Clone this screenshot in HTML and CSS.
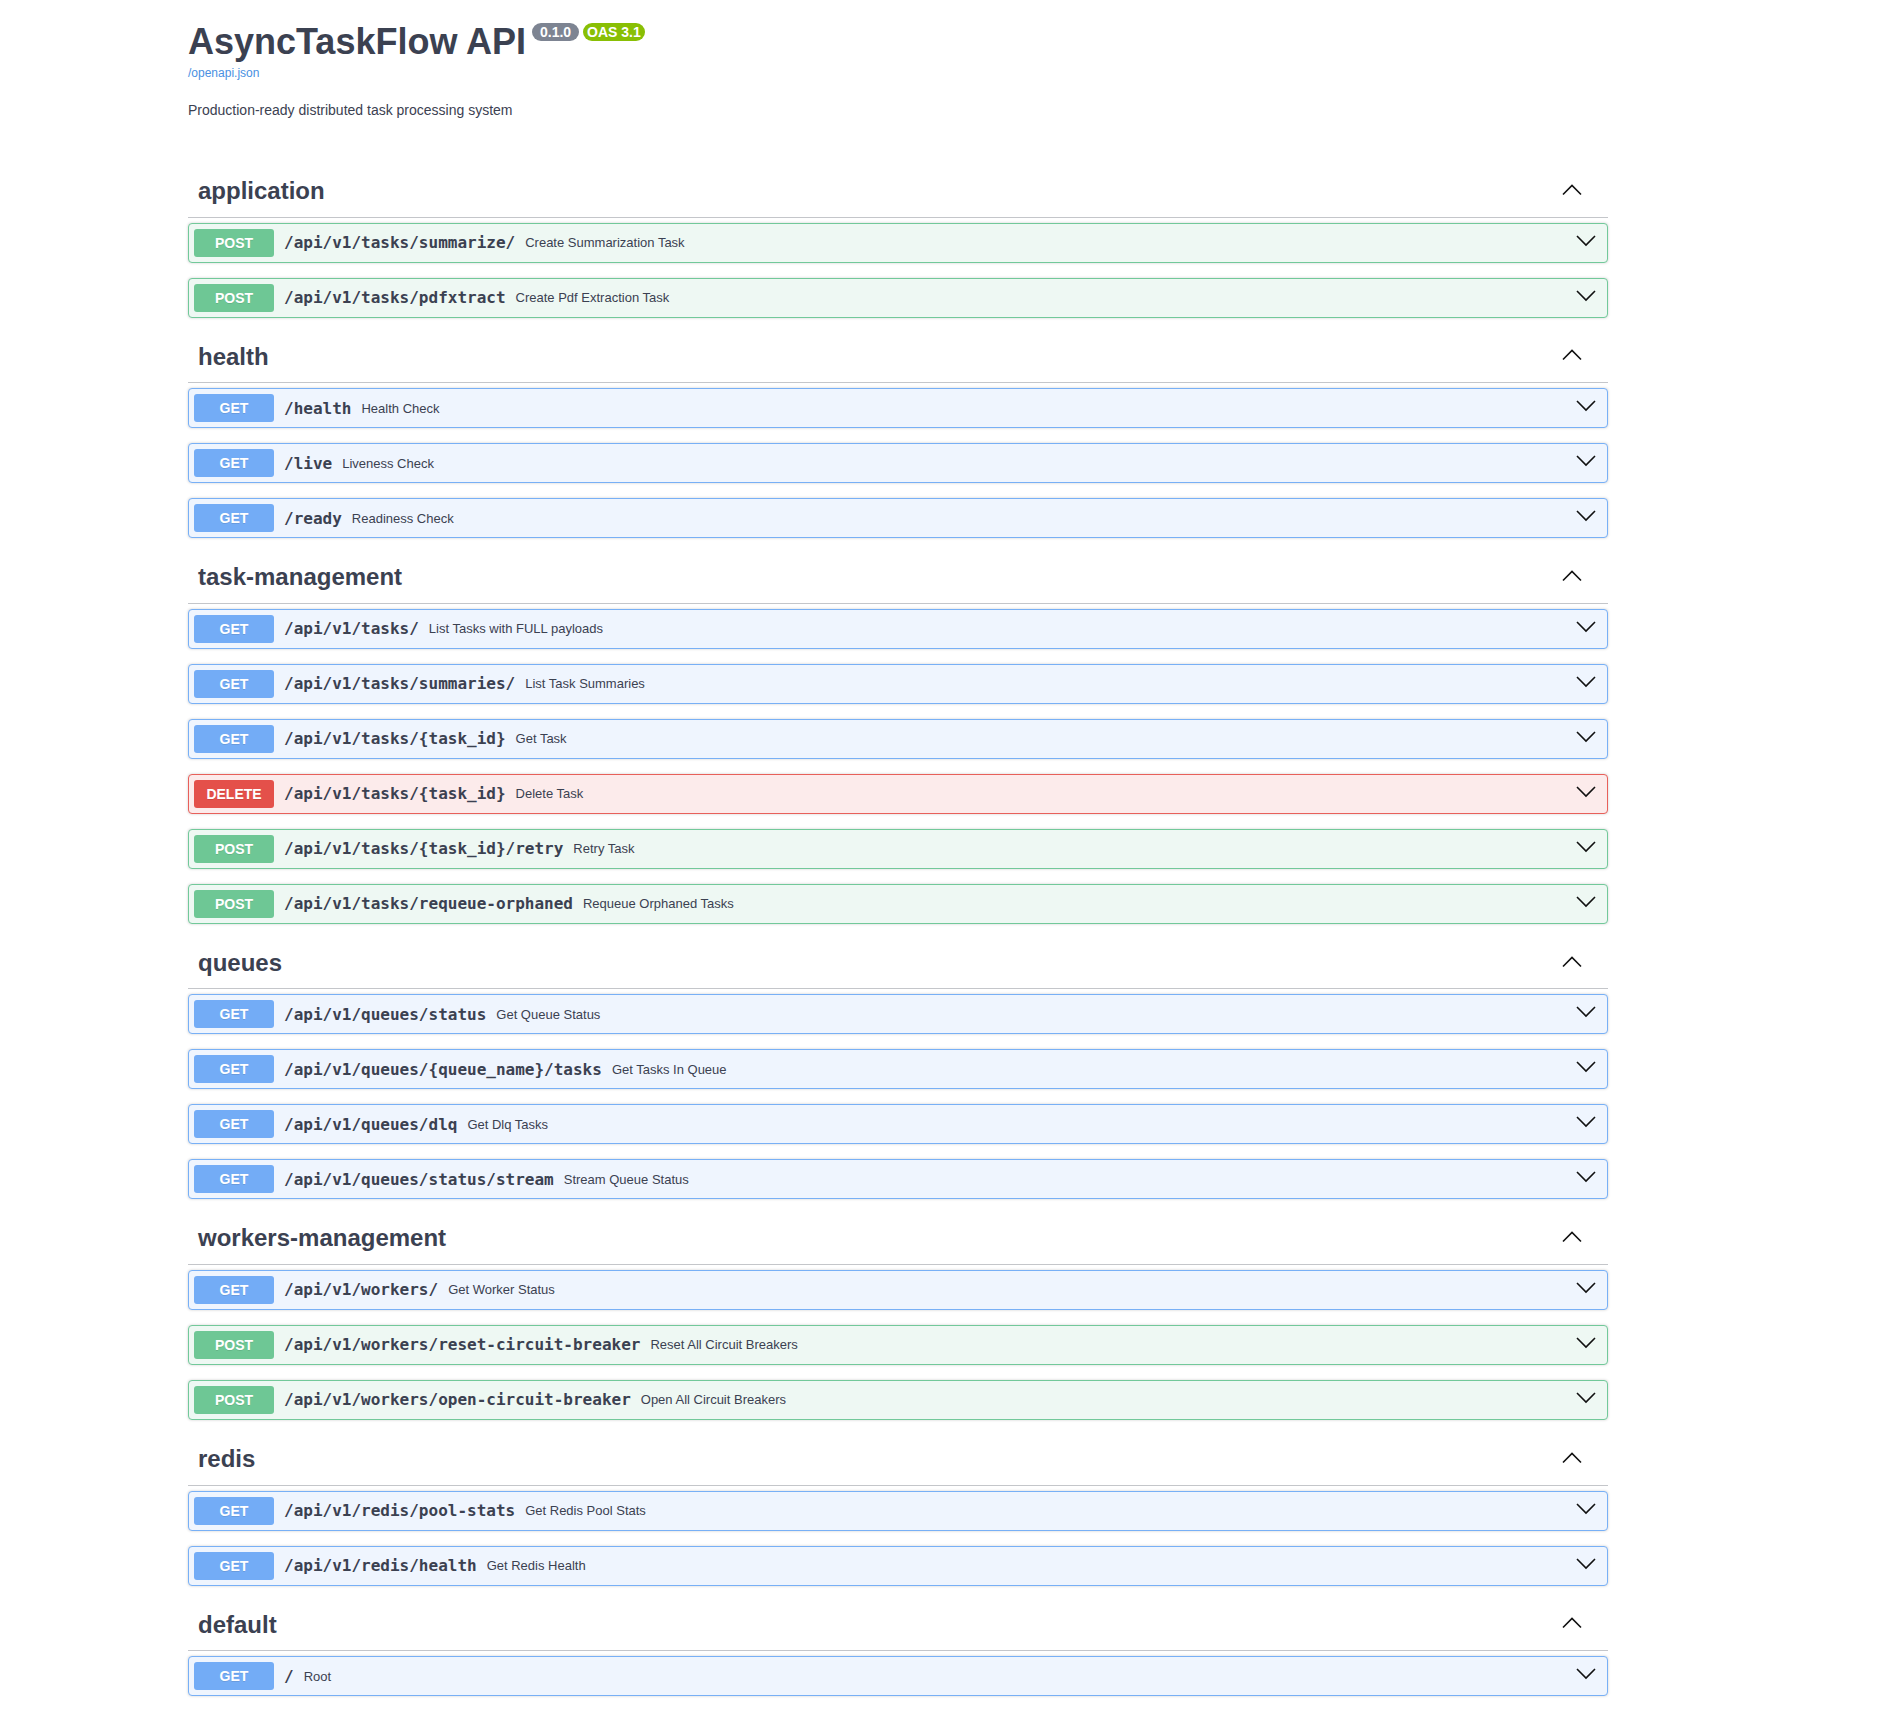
FILE: index.html
```html
<!DOCTYPE html>
<html lang="en">
<head>
<meta charset="utf-8">
<title>AsyncTaskFlow API</title>
<link rel="stylesheet" href="styles.css">
</head>
<body>
<div class="page">
  <header class="info">
    <div class="title-row">
      <h2 class="title">AsyncTaskFlow API</h2>
      <span class="badge badge-version"> 0.1.0 </span>
      <span class="badge badge-oas">OAS 3.1</span>
    </div>
    <a class="spec-link" href="#">/openapi.json</a>
    <p class="description">Production-ready distributed task processing system</p>
  </header>

  <section class="tag-section">
    <h3 class="tag"><span class="tag-name">application</span><svg class="tag-arrow" width="20" height="20" viewBox="0 0 20 20"><path d="M1 13.5 L10 4.5 L19 13.5"/></svg></h3>
    <div class="op op-post"><span class="method">POST</span><span class="op-text"><span class="path">/api/v1/tasks/summarize/</span><span class="summary">Create Summarization Task</span></span><svg class="op-arrow" width="20" height="20" viewBox="0 0 20 20"><path d="M1 3 L10 12 L19 3"/></svg></div>
    <div class="op op-post"><span class="method">POST</span><span class="op-text"><span class="path">/api/v1/tasks/pdfxtract</span><span class="summary">Create Pdf Extraction Task</span></span><svg class="op-arrow" width="20" height="20" viewBox="0 0 20 20"><path d="M1 3 L10 12 L19 3"/></svg></div>
  </section>

  <section class="tag-section">
    <h3 class="tag"><span class="tag-name">health</span><svg class="tag-arrow" width="20" height="20" viewBox="0 0 20 20"><path d="M1 13.5 L10 4.5 L19 13.5"/></svg></h3>
    <div class="op op-get"><span class="method">GET</span><span class="op-text"><span class="path">/health</span><span class="summary">Health Check</span></span><svg class="op-arrow" width="20" height="20" viewBox="0 0 20 20"><path d="M1 3 L10 12 L19 3"/></svg></div>
    <div class="op op-get"><span class="method">GET</span><span class="op-text"><span class="path">/live</span><span class="summary">Liveness Check</span></span><svg class="op-arrow" width="20" height="20" viewBox="0 0 20 20"><path d="M1 3 L10 12 L19 3"/></svg></div>
    <div class="op op-get"><span class="method">GET</span><span class="op-text"><span class="path">/ready</span><span class="summary">Readiness Check</span></span><svg class="op-arrow" width="20" height="20" viewBox="0 0 20 20"><path d="M1 3 L10 12 L19 3"/></svg></div>
  </section>

  <section class="tag-section">
    <h3 class="tag"><span class="tag-name">task-management</span><svg class="tag-arrow" width="20" height="20" viewBox="0 0 20 20"><path d="M1 13.5 L10 4.5 L19 13.5"/></svg></h3>
    <div class="op op-get"><span class="method">GET</span><span class="op-text"><span class="path">/api/v1/tasks/</span><span class="summary">List Tasks with FULL payloads</span></span><svg class="op-arrow" width="20" height="20" viewBox="0 0 20 20"><path d="M1 3 L10 12 L19 3"/></svg></div>
    <div class="op op-get"><span class="method">GET</span><span class="op-text"><span class="path">/api/v1/tasks/summaries/</span><span class="summary">List Task Summaries</span></span><svg class="op-arrow" width="20" height="20" viewBox="0 0 20 20"><path d="M1 3 L10 12 L19 3"/></svg></div>
    <div class="op op-get"><span class="method">GET</span><span class="op-text"><span class="path">/api/v1/tasks/{task_id}</span><span class="summary">Get Task</span></span><svg class="op-arrow" width="20" height="20" viewBox="0 0 20 20"><path d="M1 3 L10 12 L19 3"/></svg></div>
    <div class="op op-delete"><span class="method">DELETE</span><span class="op-text"><span class="path">/api/v1/tasks/{task_id}</span><span class="summary">Delete Task</span></span><svg class="op-arrow" width="20" height="20" viewBox="0 0 20 20"><path d="M1 3 L10 12 L19 3"/></svg></div>
    <div class="op op-post"><span class="method">POST</span><span class="op-text"><span class="path">/api/v1/tasks/{task_id}/retry</span><span class="summary">Retry Task</span></span><svg class="op-arrow" width="20" height="20" viewBox="0 0 20 20"><path d="M1 3 L10 12 L19 3"/></svg></div>
    <div class="op op-post"><span class="method">POST</span><span class="op-text"><span class="path">/api/v1/tasks/requeue-orphaned</span><span class="summary">Requeue Orphaned Tasks</span></span><svg class="op-arrow" width="20" height="20" viewBox="0 0 20 20"><path d="M1 3 L10 12 L19 3"/></svg></div>
  </section>

  <section class="tag-section">
    <h3 class="tag"><span class="tag-name">queues</span><svg class="tag-arrow" width="20" height="20" viewBox="0 0 20 20"><path d="M1 13.5 L10 4.5 L19 13.5"/></svg></h3>
    <div class="op op-get"><span class="method">GET</span><span class="op-text"><span class="path">/api/v1/queues/status</span><span class="summary">Get Queue Status</span></span><svg class="op-arrow" width="20" height="20" viewBox="0 0 20 20"><path d="M1 3 L10 12 L19 3"/></svg></div>
    <div class="op op-get"><span class="method">GET</span><span class="op-text"><span class="path">/api/v1/queues/{queue_name}/tasks</span><span class="summary">Get Tasks In Queue</span></span><svg class="op-arrow" width="20" height="20" viewBox="0 0 20 20"><path d="M1 3 L10 12 L19 3"/></svg></div>
    <div class="op op-get"><span class="method">GET</span><span class="op-text"><span class="path">/api/v1/queues/dlq</span><span class="summary">Get Dlq Tasks</span></span><svg class="op-arrow" width="20" height="20" viewBox="0 0 20 20"><path d="M1 3 L10 12 L19 3"/></svg></div>
    <div class="op op-get"><span class="method">GET</span><span class="op-text"><span class="path">/api/v1/queues/status/stream</span><span class="summary">Stream Queue Status</span></span><svg class="op-arrow" width="20" height="20" viewBox="0 0 20 20"><path d="M1 3 L10 12 L19 3"/></svg></div>
  </section>

  <section class="tag-section">
    <h3 class="tag"><span class="tag-name">workers-management</span><svg class="tag-arrow" width="20" height="20" viewBox="0 0 20 20"><path d="M1 13.5 L10 4.5 L19 13.5"/></svg></h3>
    <div class="op op-get"><span class="method">GET</span><span class="op-text"><span class="path">/api/v1/workers/</span><span class="summary">Get Worker Status</span></span><svg class="op-arrow" width="20" height="20" viewBox="0 0 20 20"><path d="M1 3 L10 12 L19 3"/></svg></div>
    <div class="op op-post"><span class="method">POST</span><span class="op-text"><span class="path">/api/v1/workers/reset-circuit-breaker</span><span class="summary">Reset All Circuit Breakers</span></span><svg class="op-arrow" width="20" height="20" viewBox="0 0 20 20"><path d="M1 3 L10 12 L19 3"/></svg></div>
    <div class="op op-post"><span class="method">POST</span><span class="op-text"><span class="path">/api/v1/workers/open-circuit-breaker</span><span class="summary">Open All Circuit Breakers</span></span><svg class="op-arrow" width="20" height="20" viewBox="0 0 20 20"><path d="M1 3 L10 12 L19 3"/></svg></div>
  </section>

  <section class="tag-section">
    <h3 class="tag"><span class="tag-name">redis</span><svg class="tag-arrow" width="20" height="20" viewBox="0 0 20 20"><path d="M1 13.5 L10 4.5 L19 13.5"/></svg></h3>
    <div class="op op-get"><span class="method">GET</span><span class="op-text"><span class="path">/api/v1/redis/pool-stats</span><span class="summary">Get Redis Pool Stats</span></span><svg class="op-arrow" width="20" height="20" viewBox="0 0 20 20"><path d="M1 3 L10 12 L19 3"/></svg></div>
    <div class="op op-get"><span class="method">GET</span><span class="op-text"><span class="path">/api/v1/redis/health</span><span class="summary">Get Redis Health</span></span><svg class="op-arrow" width="20" height="20" viewBox="0 0 20 20"><path d="M1 3 L10 12 L19 3"/></svg></div>
  </section>

  <section class="tag-section">
    <h3 class="tag"><span class="tag-name">default</span><svg class="tag-arrow" width="20" height="20" viewBox="0 0 20 20"><path d="M1 13.5 L10 4.5 L19 13.5"/></svg></h3>
    <div class="op op-get"><span class="method">GET</span><span class="op-text"><span class="path">/</span><span class="summary">Root</span></span><svg class="op-arrow" width="20" height="20" viewBox="0 0 20 20"><path d="M1 3 L10 12 L19 3"/></svg></div>
  </section>
</div>
</body>
</html>
```

FILE: styles.css
```css
html, body {
  margin: 0;
  padding: 0;
  background: #ffffff;
}

body {
  font-family: "Liberation Sans", Arial, sans-serif;
  color: #3b4151;
}

.page {
  width: 1420px;
  margin-left: 188px;
  padding-bottom: 40px;
}

/* ---------- info header ---------- */
.info {
  padding-top: 22px;
  margin-bottom: 49px;
}

.title-row {
  display: flex;
  align-items: flex-start;
}

.title {
  margin: 0;
  font-size: 36px;
  line-height: 40px;
  font-weight: 700;
  color: #3b4151;
}

.badge {
  margin-top: 1px;
  padding: 1px 4px;
  border-radius: 57px;
  font-size: 14px;
  line-height: 16px;
  font-weight: 700;
  color: #ffffff;
  white-space: pre;
}

.badge-version {
  margin-left: 6px;
  background: #7d8492;
}

.badge-oas {
  margin-left: 4px;
  background: #89bf04;
}

.spec-link {
  display: block;
  margin-top: 4px;
  font-size: 12px;
  line-height: 14px;
  color: #4990e2;
  text-decoration: none;
}

.description {
  margin: 22px 0 0;
  font-size: 14px;
  line-height: 16px;
  color: #3b4151;
}

/* ---------- tag sections ---------- */
.tag-section {
  display: flex;
  flex-direction: column;
}

.tag {
  display: flex;
  align-items: center;
  margin: 0 0 5px;
  padding: 9px 20px 11px 10px;
  border-bottom: 1px solid rgba(59, 65, 81, 0.3);
  font-size: 24px;
  line-height: 29.6px;
  font-weight: 700;
  color: #3b4151;
}

.tag-name {
  flex: 1;
}

.tag-arrow,
.op-arrow {
  flex: none;
  margin-right: 6px;
  fill: none;
  stroke: #111111;
  stroke-width: 1.6;
}

/* ---------- operations ---------- */
.op {
  display: flex;
  align-items: center;
  margin: 0 0 15px;
  padding: 5px;
  border: 1px solid #000;
  border-radius: 4px;
  box-shadow: 0 0 3px rgba(0, 0, 0, 0.19);
}

.method {
  flex: none;
  min-width: 80px;
  padding: 6px 0;
  border-radius: 3px;
  font-size: 14px;
  line-height: 16px;
  font-weight: 700;
  text-align: center;
  color: #ffffff;
  text-shadow: 0 1px 0 rgba(0, 0, 0, 0.1);
}

.op-text {
  flex: 1;
  display: flex;
  align-items: center;
  gap: 10px;
  padding: 0 10px;
}

.path {
  font-family: "DejaVu Sans Mono", "Liberation Mono", monospace;
  font-size: 16px;
  font-weight: 700;
  color: #3b4151;
}

.summary {
  font-size: 13px;
  color: #3b4151;
}

.op-post {
  background: #eef8f3;
  border-color: #72c99a;
}
.op-post .method {
  background: #6ec795;
}

.op-get {
  background: #eff5fe;
  border-color: #78b0f6;
}
.op-get .method {
  background: #73acf6;
}

.op-delete {
  background: #fcebeb;
  border-color: #e8605a;
}
.op-delete .method {
  background: #e4504a;
}
```
